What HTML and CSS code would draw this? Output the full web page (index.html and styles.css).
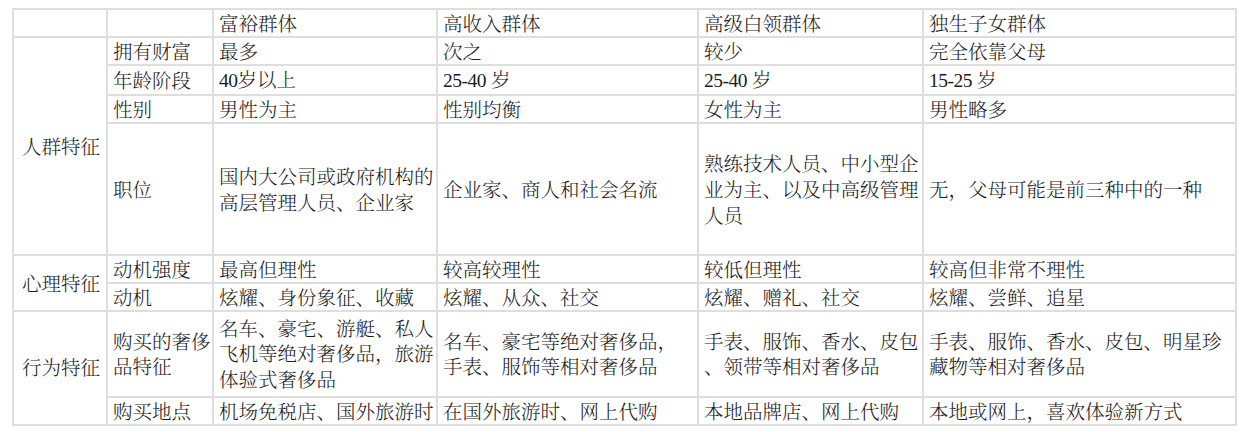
FILE: index.html
```html
<!DOCTYPE html>
<html lang="zh-CN">
<head>
<meta charset="utf-8">
<title>奢侈品消费群体</title>
<link rel="stylesheet" href="styles.css">
</head>
<body>
<div class="wrap">
<table class="grid">
  <colgroup>
    <col class="c1"><col class="c2"><col class="c3"><col class="c4"><col class="c5"><col class="c6">
  </colgroup>
  <tr class="r1">
    <td></td><td></td><td>富裕群体</td><td>高收入群体</td><td>高级白领群体</td><td>独生子女群体</td>
  </tr>
  <tr class="r1">
    <td rowspan="4" class="cat">人群特征</td><td>拥有财富</td><td>最多</td><td>次之</td><td>较少</td><td>完全依靠父母</td>
  </tr>
  <tr class="r1">
    <td>年龄阶段</td><td><span class="num">40</span>岁以上</td><td><span class="num">25-40</span> 岁</td><td><span class="num">25-40</span> 岁</td><td><span class="num">15-25</span> 岁</td>
  </tr>
  <tr class="r1">
    <td>性别</td><td>男性为主</td><td>性别均衡</td><td>女性为主</td><td>男性略多</td>
  </tr>
  <tr class="rjob">
    <td>职位</td><td>国内大公司或政府机构的<br>高层管理人员、企业家</td><td>企业家、商人和社会名流</td><td>熟练技术人员、中小型企<br>业为主、以及中高级管理<br>人员</td><td>无，父母可能是前三种中的一种</td>
  </tr>
  <tr class="r1">
    <td rowspan="2" class="cat">心理特征</td><td>动机强度</td><td>最高但理性</td><td>较高较理性</td><td>较低但理性</td><td>较高但非常不理性</td>
  </tr>
  <tr class="r1">
    <td>动机</td><td>炫耀、身份象征、收藏</td><td>炫耀、从众、社交</td><td>炫耀、赠礼、社交</td><td>炫耀、尝鲜、追星</td>
  </tr>
  <tr class="rbuy">
    <td rowspan="2" class="cat">行为特征</td><td>购买的奢侈<br>品特征</td><td>名车、豪宅、游艇、私人<br>飞机等绝对奢侈品，旅游<br>体验式奢侈品</td><td>名车、豪宅等绝对奢侈品，<br>手表、服饰等相对奢侈品</td><td>手表、服饰、香水、皮包<br>、领带等相对奢侈品</td><td>手表、服饰、香水、皮包、明星珍<br>藏物等相对奢侈品</td>
  </tr>
  <tr class="r1">
    <td>购买地点</td><td>机场免税店、国外旅游时</td><td>在国外旅游时、网上代购</td><td>本地品牌店、网上代购</td><td>本地或网上，喜欢体验新方式</td>
  </tr>
</table>
</div>
</body>
</html>
```
FILE: styles.css
```css
html, body {
  margin: 0;
  padding: 0;
  background: #ffffff;
}
.wrap {
  padding: 8px 0 0 12px;
}
.grid {
  border-collapse: collapse;
  table-layout: fixed;
  width: 1224px;
  font-family: "Noto Serif CJK SC", "Noto Sans CJK SC", serif;
  font-size: 19.5px;
  font-weight: 300;
  color: #1c1c1c;
}
.num {
  font-family: "Liberation Serif", serif;
  font-weight: 400;
  letter-spacing: -0.5px;
}
.c1 { width: 94px; }
.c2 { width: 106px; }
.c3 { width: 224px; }
.c4 { width: 261px; }
.c5 { width: 225px; }
.c6 { width: 313px; }
.grid td {
  border: 2px solid #dedede;
  padding: 0 2px 0 5px;
  vertical-align: middle;
  text-align: left;
  white-space: nowrap;
  line-height: 26px;
  overflow: hidden;
}
.grid td.cat {
  text-align: center;
  padding: 0 2px 0 4px;
}
.r1 td { height: 24.5px; }
.rjob td { height: 130px; }
.rbuy td { height: 84px; }
.rbuy td { line-height: 25.5px; }
```
